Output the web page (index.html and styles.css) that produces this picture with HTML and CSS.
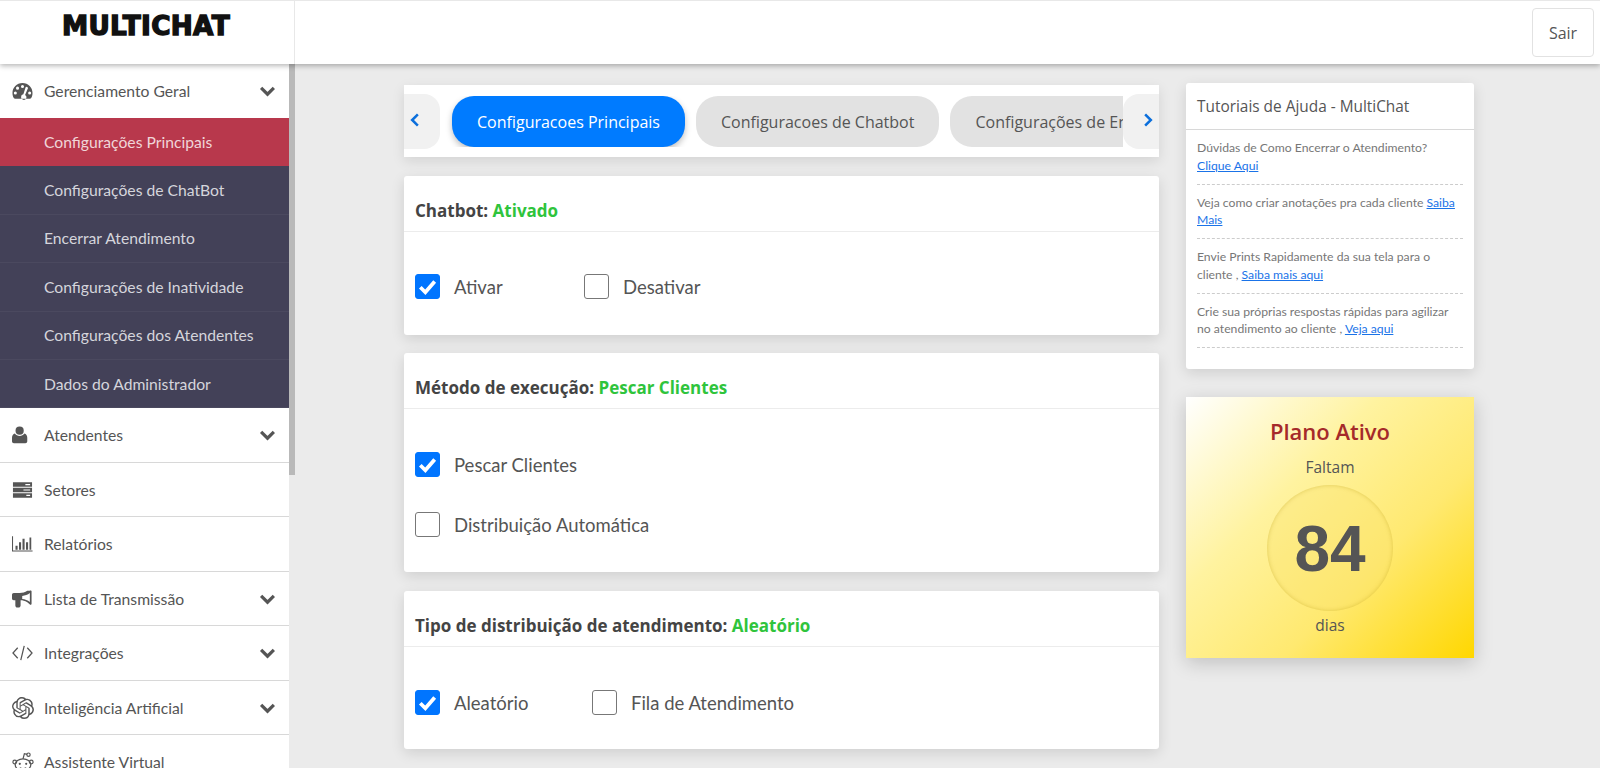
FILE: index.html
```html
<!DOCTYPE html>
<html lang="pt-BR">
  <head>
    <meta charset="UTF-8" />
    <title>MultiChat</title>
    <link rel="stylesheet" href="styles.css">
  </head>
  <body>
    <header class="topbar">
      <div class="logo-cell"><span class="logo">MULTICHAT</span></div>
      <div class="topbar-right"><button class="logout">Sair</button></div>
    </header>

    <div class="layout">
      <aside class="sidebar">
        <nav class="menu">
          <a class="menu-item menu-item-open">
            <svg class="menu-icon" viewBox="0 0 22 18"><path fill-rule="evenodd" d="M11 0.5C5 0.5 0.5 5.2 0.5 11c0 2 .5 3.800 1.400 5.300.3.500.8.700 1.300.700h15.600c.5 0 1-.2 1.300-.7.900-1.500 1.400-3.300 1.400-5.300C21.500 5.200 17 .5 11 .5zM11 2.600a1.600 1.600 0 1 1 0 3.200 1.600 1.600 0 0 1 0-3.200zM5.800 4.400a1.600 1.600 0 1 1 0 3.200 1.600 1.600 0 0 1 0-3.200zM3.500 9.400a1.600 1.600 0 1 1 0 3.200 1.600 1.600 0 0 1 0-3.200zM18.500 9.400a1.600 1.600 0 1 1 0 3.200 1.600 1.600 0 0 1 0-3.200zM15.800 4.700a1.300 1.300 0 0 1 .8 1.700l-2.900 6.700a2.800 2.800 0 1 1-4.200 2.200 2.800 2.800 0 0 1 2.400-2.800l2.200-7a1.300 1.300 0 0 1 1.700-.8z"/></svg>
            <span class="menu-label">Gerenciamento Geral</span>
            <svg class="chevron" viewBox="0 0 16 11"><path d="M2 2.500l6 6 6-6"/></svg>
          </a>
          <div class="submenu">
            <a class="submenu-item submenu-item-active">Configurações Principais</a>
            <a class="submenu-item">Configurações de ChatBot</a>
            <a class="submenu-item">Encerrar Atendimento</a>
            <a class="submenu-item">Configurações de Inatividade</a>
            <a class="submenu-item">Configurações dos Atendentes</a>
            <a class="submenu-item">Dados do Administrador</a>
          </div>
          <a class="menu-item">
            <svg class="menu-icon" viewBox="0 0 22 18"><circle cx="8" cy="4.500" r="4.300"/><path d="M3 7.500c1 1.500 3 2.500 5 2.500s4-1 5-2.500c1.800.5 3 2 3 4.500v3.500c0 1.200-.9 2.100-2 2.100H2c-1.100 0-2-.9-2-2.100V12c0-2.500 1.200-4 3-4.500z"/></svg>
            <span class="menu-label">Atendentes</span>
            <svg class="chevron" viewBox="0 0 16 11"><path d="M2 2.500l6 6 6-6"/></svg>
          </a>
          <a class="menu-item">
            <svg class="menu-icon" viewBox="0 0 22 18"><path fill-rule="evenodd" d="M1 1h20v4.600H1zM14 2.700h5v1.200h-5zM1 6.700h20v4.600H1zM12 8.400h7v1.200h-7zM1 12.400h20v4.600H1zM15 14.100h4v1.200h-4z"/></svg>
            <span class="menu-label">Setores</span>
          </a>
          <a class="menu-item">
            <svg class="menu-icon" viewBox="0 0 24 18"><path d="M0 0h1.200v16.400H23.500v1.200H0z"/><path d="M4 11h2.400v4.500H4zM8 7h2.400v8.500H8zM12 3h2.400v12.500H12zM16 7h2.400v8.500H16zM20 1.500h2v14H20z"/></svg>
            <span class="menu-label">Relatórios</span>
          </a>
          <a class="menu-item">
            <svg class="menu-icon" viewBox="0 0 22 18"><path fill-rule="evenodd" d="M19.500 0c.5 0 1 .4 1 1v13c0 .6-.5 1-1 1-.4 0-.7-.3-1-.6L16 12.300C13.500 10.700 11 10.400 9 10.300v5.500c0 1.200-1 2.200-2.200 2.200H5.600c-1.200 0-2.100-1-2.100-2.200V10.300H1.800C.8 10.300 0 9.500 0 8.500v-4C0 3.500.8 2.700 1.800 2.700H8c3 0 5.700-.5 8-2.300L18.500.4c.3-.2.600-.4 1-.4zM18.700 2.800c-2.300 1.800-5 2.800-8 3v3.300c3 .2 5.700 1.300 8 3.100z"/></svg>
            <span class="menu-label">Lista de Transmissão</span>
            <svg class="chevron" viewBox="0 0 16 11"><path d="M2 2.500l6 6 6-6"/></svg>
          </a>
          <a class="menu-item">
            <svg class="menu-icon icon-line" viewBox="0 0 22 18"><path d="M6 3.500L1 9l5 5.500M16 3.500l5 5.500-5 5.500M12.800 1.500L9.200 16.500"/></svg>
            <span class="menu-label">Integrações</span>
            <svg class="chevron" viewBox="0 0 16 11"><path d="M2 2.500l6 6 6-6"/></svg>
          </a>
          <a class="menu-item">
            <svg class="menu-icon menu-icon-ai" viewBox="0 0 24 24"><path d="M22.2819 9.8211a5.9847 5.9847 0 0 0-.5157-4.9108 6.0462 6.0462 0 0 0-6.5098-2.9A6.0651 6.0651 0 0 0 4.9807 4.1818a5.9847 5.9847 0 0 0-3.9977 2.9 6.0462 6.0462 0 0 0 .7427 7.0966 5.98 5.98 0 0 0 .511 4.9107 6.051 6.051 0 0 0 6.5146 2.9001A5.9847 5.9847 0 0 0 13.2599 24a6.0557 6.0557 0 0 0 5.7718-4.2058 5.9894 5.9894 0 0 0 3.9977-2.9001 6.0557 6.0557 0 0 0-.7475-7.0729zm-9.022 12.6081a4.4755 4.4755 0 0 1-2.8764-1.0408l.1419-.0804 4.7783-2.7582a.7948.7948 0 0 0 .3927-.6813v-6.7369l2.02 1.1686a.071.071 0 0 1 .038.052v5.5826a4.504 4.504 0 0 1-4.4945 4.4944zm-9.6607-4.1254a4.4708 4.4708 0 0 1-.5346-3.0137l.142.0852 4.783 2.7582a.7712.7712 0 0 0 .7806 0l5.8428-3.3685v2.3324a.0804.0804 0 0 1-.0332.0615L9.74 19.9502a4.4992 4.4992 0 0 1-6.1408-1.6464zM2.3408 7.8956a4.485 4.485 0 0 1 2.3655-1.9728V11.6a.7664.7664 0 0 0 .3879.6765l5.8144 3.3543-2.0201 1.1685a.0757.0757 0 0 1-.071 0l-4.8303-2.7865A4.504 4.504 0 0 1 2.3408 7.872zm16.5963 3.8558L13.1038 8.364 15.1192 7.2a.0757.0757 0 0 1 .071 0l4.8303 2.7913a4.4944 4.4944 0 0 1-.6765 8.1042v-5.6772a.79.79 0 0 0-.407-.667zm2.0107-3.0231l-.142-.0852-4.7735-2.7818a.7759.7759 0 0 0-.7854 0L9.409 9.2297V6.8974a.0662.0662 0 0 1 .0284-.0615l4.8303-2.7866a4.4992 4.4992 0 0 1 6.6802 4.66zM8.3065 12.863l-2.02-1.1638a.0804.0804 0 0 1-.038-.0567V6.0742a4.4992 4.4992 0 0 1 7.3757-3.4537l-.142.0805L8.704 5.459a.7948.7948 0 0 0-.3927.6813zm1.0976-2.3654l2.602-1.4998 2.6069 1.4998v2.9994l-2.5974 1.4997-2.6067-1.4997Z"/></svg>
            <span class="menu-label">Inteligência Artificial</span>
            <svg class="chevron" viewBox="0 0 16 11"><path d="M2 2.500l6 6 6-6"/></svg>
          </a>
          <a class="menu-item">
            <svg class="menu-icon menu-icon-ai icon-line" viewBox="0 0 24 24">
              <ellipse cx="12" cy="15" rx="8.500" ry="6.500"/>
              <circle cx="3" cy="12" r="2"/>
              <circle cx="21" cy="12" r="2"/>
              <circle cx="18" cy="4" r="1.800"/>
              <path d="M12 8.500L13.500 3l3 .6M8.500 18.200c2 1.200 5 1.200 7 0"/>
              <circle class="icon-dot" cx="8.500" cy="14" r="1.200"/>
              <circle class="icon-dot" cx="15.500" cy="14" r="1.200"/>
            </svg>
            <span class="menu-label">Assistente Virtual</span>
          </a>
        </nav>
        <div class="scroll-track"><div class="scroll-thumb"></div></div>
      </aside>

      <main class="content">
        <section class="settings">
          <div class="tabs">
            <button class="tab-arrow tab-arrow-left"><svg viewBox="0 0 10 14"><path d="M7.500 2L2.500 7l5 5"/></svg></button>
            <div class="tab-list">
              <a class="tab tab-active">Configuracoes Principais</a>
              <a class="tab">Configuracoes de Chatbot</a>
              <a class="tab">Configurações de Encerramento</a>
            </div>
            <button class="tab-arrow tab-arrow-right"><svg viewBox="0 0 10 14"><path d="M2.500 2l5 5-5 5"/></svg></button>
          </div>

          <div class="card">
            <h3 class="card-title">Chatbot: <span class="status">Ativado</span></h3>
            <div class="card-body card-body-row card-body-chatbot">
              <label class="check check-wide"><span class="box box-on"><svg viewBox="0 0 16 16"><path d="M3 8.500l3.500 3.500L13 4.500"/></svg></span>Ativar</label>
              <label class="check"><span class="box"></span>Desativar</label>
            </div>
          </div>

          <div class="card">
            <h3 class="card-title">Método de execução: <span class="status">Pescar Clientes</span></h3>
            <div class="card-body card-body-stack">
              <label class="check"><span class="box box-on"><svg viewBox="0 0 16 16"><path d="M3 8.500l3.500 3.500L13 4.500"/></svg></span>Pescar Clientes</label>
              <label class="check"><span class="box"></span>Distribuição Automática</label>
            </div>
          </div>

          <div class="card">
            <h3 class="card-title">Tipo de distribuição de atendimento: <span class="status">Aleatório</span></h3>
            <div class="card-body card-body-row card-body-tipo">
              <label class="check check-wide"><span class="box box-on"><svg viewBox="0 0 16 16"><path d="M3 8.500l3.500 3.500L13 4.500"/></svg></span>Aleatório</label>
              <label class="check"><span class="box"></span>Fila de Atendimento</label>
            </div>
          </div>
        </section>

        <aside class="side-col">
          <div class="help">
            <h4 class="help-title">Tutoriais de Ajuda - MultiChat</h4>
            <ul class="help-list">
              <li>Dúvidas de Como Encerrar o Atendimento? <a href="#">Clique Aqui</a></li>
              <li>Veja como criar anotações pra cada cliente <a href="#">Saiba Mais</a></li>
              <li>Envie Prints Rapidamente da sua tela para o cliente , <a href="#">Saiba mais aqui</a></li>
              <li>Crie sua próprias respostas rápidas para agilizar no atendimento ao cliente , <a href="#">Veja aqui</a></li>
            </ul>
          </div>

          <div class="plan">
            <h2 class="plan-title">Plano Ativo</h2>
            <p class="plan-text">Faltam</p>
            <div class="plan-circle">84</div>
            <p class="plan-text plan-text-days">dias</p>
          </div>
        </aside>
      </main>
    </div>
  </body>
</html>
```

FILE: styles.css
```css
* {
  box-sizing: border-box;
  margin: 0;
  padding: 0;
}
html,
body {
  height: 100%;
  overflow: hidden;
}
body {
  display: flex;
  flex-direction: column;
  background: #ebebeb;
  color: #555;
  font-family: 'Open Sans', 'Noto Sans', sans-serif;
}

/* top bar */
.topbar {
  position: relative;
  z-index: 2;
  display: flex;
  flex: 0 0 64px;
  background: #fff;
  border-top: 1px solid #e8e8e8;
  box-shadow: 0 2px 5px rgba(0, 0, 0, 0.28);
}
.logo-cell {
  flex: 0 0 295px;
  padding: 8px 0 0 62px;
  border-right: 1px solid #e8e8e8;
}
.logo {
  display: block;
  color: #111;
  font-family: 'DejaVu Sans', sans-serif;
  font-size: 26.3px;
  font-weight: 700;
  line-height: 34px;
  letter-spacing: 0.3px;
  -webkit-text-stroke: 1.4px #111;
}
.topbar-right {
  display: flex;
  flex: 1;
  justify-content: flex-end;
  padding: 7px 6px 0 0;
}
.logout {
  width: 62px;
  height: 49px;
  background: #fff;
  color: #555;
  border: 1px solid #e2e2e2;
  border-radius: 4px;
  font-family: inherit;
  font-size: 16px;
}

/* sidebar */
.layout {
  display: flex;
  flex: 1;
  min-height: 0;
}
.sidebar {
  display: flex;
  flex: 0 0 295px;
  overflow: hidden;
}
.menu {
  flex: 1;
  background: #fff;
  font-family: 'Lato', sans-serif;
}
.menu-item {
  display: flex;
  align-items: center;
  height: 54.5px;
  padding: 0 13px 0 12px;
  border-bottom: 1px solid #d8d8d8;
  color: #555;
  font-size: 15.7px;
}
.menu-item-open {
  height: 54px;
  border-bottom: 0;
}
.menu-icon {
  flex: 0 0 21px;
  width: 21px;
  height: 18px;
  margin-right: 11px;
  fill: #555;
}
.menu-icon-ai {
  width: 22px;
  height: 22px;
  flex-basis: 22px;
  margin-right: 10px;
}
.icon-line {
  fill: none;
  stroke: #555;
  stroke-width: 1.300;
}
.icon-dot {
  fill: #555;
  stroke: none;
}
.menu-label {
  flex: 1;
}
.chevron {
  width: 17px;
  height: 12px;
  fill: none;
  stroke: #555;
  stroke-width: 3;
}
.submenu-item {
  display: flex;
  align-items: center;
  height: 48.400px;
  padding-left: 44px;
  background: #434158;
  border-bottom: 1px solid #4b495f;
  color: #d5d5dc;
  font-size: 15.7px;
}
.submenu-item-active {
  background: #b8384c;
  border-bottom: 0;
  color: #f0d5d8;
}
.scroll-track {
  flex: 0 0 6px;
  background: #ebebeb;
}
.scroll-thumb {
  height: 411px;
  background: #b9b9b9;
}

/* main */
.content {
  display: flex;
  flex: 1;
  align-items: flex-start;
  gap: 27px;
  padding: 21px 0 0 109px;
}
.settings {
  flex: 0 0 755px;
}
.tabs {
  display: flex;
  align-items: center;
  height: 72px;
  margin-bottom: 19px;
  background: #fff;
  box-shadow: 0 4px 12px rgba(0, 0, 0, 0.1);
}
.tab-arrow {
  flex: 0 0 36px;
  height: 55px;
  background: #f1f1f1;
  border: 0;
}
.tab-arrow svg {
  width: 12px;
  height: 16px;
  fill: none;
  stroke: #0b6fdc;
  stroke-width: 2.200;
}
.tab-arrow-left {
  border-radius: 0 16px 16px 0;
  text-align: left;
  padding-left: 5px;
}
.tab-arrow-right {
  border-radius: 16px 0 0 16px;
  text-align: right;
  padding-right: 5px;
}
.tab-list {
  display: flex;
  flex: 1;
  gap: 11px;
  padding-left: 12px;
  overflow: hidden;
}
.tab {
  flex-shrink: 0;
  height: 51px;
  padding: 0 25px;
  background: #e2e2e2;
  border-radius: 22px;
  color: #555;
  font-size: 16px;
  line-height: 53px;
}
.tab-active {
  background: #007bff;
  color: #fff;
  box-shadow: 0 3px 6px rgba(0, 0, 0, 0.25);
}
.card {
  margin-bottom: 18px;
  background: #fff;
  border-radius: 3px;
  box-shadow: 0 4px 14px rgba(0, 0, 0, 0.12);
}
.card + .card {
  margin-bottom: 19px;
}
.card-title {
  height: 56px;
  padding: 24px 11px 0;
  border-bottom: 1px solid #ececec;
  color: #444;
  font-size: 17px;
  font-weight: 700;
  line-height: 22px;
}
.status {
  color: #2fc43c;
}
.card-body {
  display: flex;
  padding-left: 11px;
}
.card-body-row {
  align-items: center;
}
.card-body-chatbot {
  height: 103px;
  padding-top: 8px;
}
.card-body-tipo {
  height: 102px;
  padding-top: 11px;
}
.card-body-stack {
  flex-direction: column;
  gap: 33px;
  height: 163px;
  padding-top: 43px;
}
.check {
  display: flex;
  align-items: center;
  color: #555;
  font-family: 'Lato', sans-serif;
  font-size: 18.5px;
  line-height: 25px;
}
.check-wide {
  min-width: 169px;
}
.card-body-tipo .check-wide {
  min-width: 177px;
}
.box {
  flex: 0 0 25px;
  width: 25px;
  height: 25px;
  margin: 0 14px 2px 0;
  background: #fff;
  border: 1px solid #777;
  border-radius: 3px;
}
.box-on {
  background: #0075ff;
  border-color: #0075ff;
}
.box svg {
  display: block;
  width: 23px;
  height: 23px;
  fill: none;
  stroke: #fff;
  stroke-width: 2.600;
}

/* right column */
.side-col {
  flex: 0 0 288px;
  margin-top: -2px;
}
.help {
  height: 286px;
  margin-bottom: 28px;
  background: #fff;
  border-radius: 3px;
  box-shadow: 0 4px 14px rgba(0, 0, 0, 0.12);
}
.help-title {
  height: 47px;
  padding: 0 11px;
  border-bottom: 1px solid #d8d8d8;
  color: #555;
  font-size: 15.4px;
  font-weight: 400;
  line-height: 47px;
}
.help-list {
  padding: 0 11px;
  list-style: none;
}
.help-list li {
  height: 54.500px;
  padding-top: 9px;
  border-bottom: 1px dashed #ccc;
  color: #777;
  font-family: 'Lato', sans-serif;
  font-size: 12.2px;
  line-height: 17.500px;
}
.help-list a {
  color: #1a73e8;
}
.plan {
  height: 261px;
  padding-top: 20px;
  background: linear-gradient(135deg, #fff 0%, #fff3a0 35%, #ffe970 65%, #ffd700 100%);
  box-shadow: 0 5px 18px rgba(0, 0, 0, 0.18);
  text-align: center;
}
.plan-title {
  color: #a52a2a;
  font-size: 22px;
  font-weight: 600;
  line-height: 28px;
}
.plan-text {
  margin-top: 11px;
  color: #555;
  font-size: 15.5px;
  line-height: 22px;
}
.plan-circle {
  width: 126px;
  height: 126px;
  margin: 7px auto 0;
  background: rgba(250, 225, 110, 0.35);
  border-radius: 50%;
  box-shadow: inset 0 0 4px rgba(170, 140, 0, 0.35);
  color: #555;
  font-family: 'Liberation Sans', sans-serif;
  font-size: 64px;
  font-weight: 700;
  line-height: 128px;
}
.plan-text-days {
  margin-top: 3px;
}
```
